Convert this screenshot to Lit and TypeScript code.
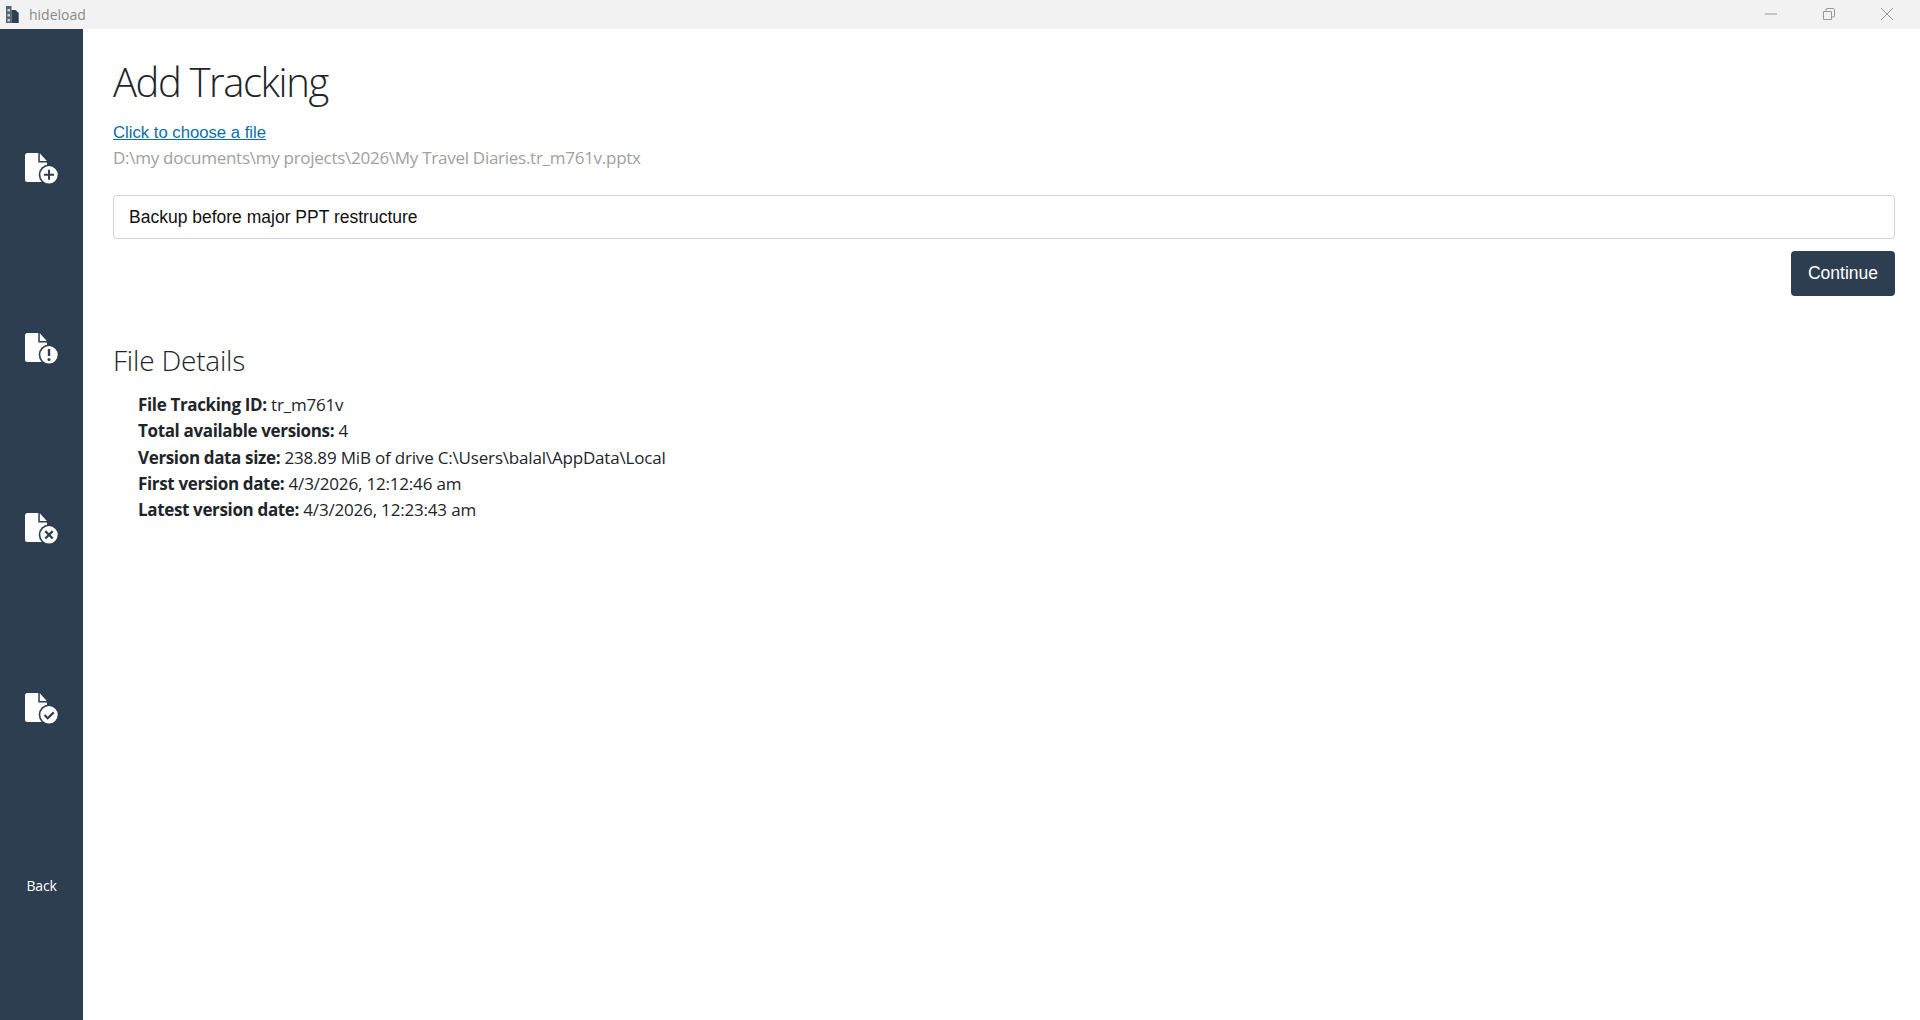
import { LitElement, html, css, svg } from "lit";
import { customElement } from "lit/decorators.js";

const badge = {
  plus: svg`<path d="M49 169.800v10M44 174.800h10" stroke="#2c3e50" stroke-width="2" fill="none"/>`,
  warn: svg`<path d="M49 169v7" stroke="#2c3e50" stroke-width="2.400" fill="none"/><circle cx="49" cy="179.600" r="1.500" fill="#2c3e50"/>`,
  cross: svg`<path d="M45.300 171.100l7.400 7.400M52.700 171.100l-7.400 7.400" stroke="#2c3e50" stroke-width="2.200" fill="none"/>`,
  check: svg`<path d="M44.500 175l3.200 3.200 6-5.800" stroke="#2c3e50" stroke-width="2.200" fill="none"/>`,
};

function fileIcon(b: keyof typeof badge) {
  return html`<svg class="ficon" width="40" height="36" viewBox="22 150 40 36" aria-hidden="true">
    <path d="M27.500 153H38.300V162.500H47V182H27.500A2.500 2.500 0 0 1 25 179.500V155.500A2.500 2.500 0 0 1 27.500 153Z" fill="#fff"/>
    <path d="M39.800 153.300L46.800 161H39.800Z" fill="#fff"/>
    <circle cx="49" cy="174.800" r="10.300" fill="#2c3e50"/>
    <circle cx="49" cy="174.800" r="8.700" fill="#fff"/>
    ${badge[b]}
  </svg>`;
}

@customElement("app-root")
export class AppRoot extends LitElement {
  static styles = css`
    :host { display: block; height: 100vh; overflow: hidden; background: #fff; font-family: "Open Sans", sans-serif; }
    .titlebar { height: 29px; background: #f2f2f2; display: flex; align-items: center; }
    .logo { margin-left: 5px; display: block; }
    .appname { margin-left: 9px; font-size: 14px; color: #8a8a8a; }
    .winbtns { margin: 0 4px 1px auto; display: flex; align-items: center; }
    .winbtn { width: 58px; display: flex; justify-content: center; }
    .main { display: flex; height: 991px; }
    .side { width: 83px; flex: none; background: #2c3e50; padding-top: 49px; box-sizing: border-box; display: flex; flex-direction: column; }
    .navitem { height: 180px; display: flex; align-items: center; justify-content: center; }
    .ficon { display: block; margin-left: 1px; }
    .back { color: #fff; font-size: 14px; height: 174px; display: flex; align-items: center; justify-content: center; letter-spacing: -0.2px; }
    .content { flex: 1; padding: 0 25px 0 30px; min-width: 0; }
    h1 { margin: 29px 0 0; font-size: 40px; line-height: 48px; font-weight: 300; color: #212529; letter-spacing: -1.4px; }
    .link { display: block; margin-top: 15px; font: 16.700px/24px "Liberation Sans", sans-serif; color: #0a6ea8; text-decoration: underline; }
    .path { margin-top: 1px; font-size: 17px; line-height: 24px; color: #a0a0a0; letter-spacing: -0.270px; }
    .field { display: block; width: 100%; box-sizing: border-box; margin-top: 25px; height: 44px; padding: 0 15px; border: 1px solid #ced4da; border-radius: 4px; font: 17.500px "Liberation Sans", sans-serif; color: #111; background: #fff; outline: none; }
    .actions { display: flex; justify-content: flex-end; margin-top: 12px; }
    .btn { height: 45px; width: 104px; border: 0; border-radius: 4px; background: #2c3e50; color: #fff; font: 17.500px "Liberation Sans", sans-serif; padding: 0; }
    h3 { margin: 47px 0 0; font-size: 28px; line-height: 34px; font-weight: 300; color: #212529; letter-spacing: -0.200px; }
    dl { margin: 15px 0 0 25px; font-size: 17px; line-height: 26.250px; color: #212529; letter-spacing: -0.180px; }
    dl div { white-space: nowrap; }
    dt, dd { display: inline; margin: 0; }
    dt { font-weight: 700; letter-spacing: -0.350px; }
  `;

  render() {
    const rows = [
      ["File Tracking ID:", "tr_m761v"],
      ["Total available versions:", "4"],
      ["Version data size:", "238.89 MiB of drive C:\\Users\\balal\\AppData\\Local"],
      ["First version date:", "4/3/2026, 12:12:46 am"],
      ["Latest version date:", "4/3/2026, 12:23:43 am"],
    ];
    return html`
      <div class="titlebar">
        <svg class="logo" width="15" height="18" viewBox="0 0 15 18" aria-hidden="true">
          <path d="M1 0h5.500v17H1z" fill="#55636f"/><path d="M6.500 4h4l3.200 3v10H6.500z" fill="#2c3e50"/><path d="M2.500 3h2.500v2.500H2.500zM2.500 8h2.500v2.500H2.500zM2.500 13h2.500v2.500H2.500z" fill="#c9ced3"/>
        </svg>
        <span class="appname">hideload</span>
        <div class="winbtns">
          <span class="winbtn"><svg width="14" height="14" viewBox="0 0 14 14"><path d="M1 7h12" stroke="#999" fill="none"/></svg></span>
          <span class="winbtn"><svg width="14" height="14" viewBox="0 0 14 14"><path d="M1.500 4.500h8v8h-8zM4 4.500V2.500q0-1 1-1h6.500q1 0 1 1V9q0 1-1 1H9.500" stroke="#999" fill="none"/></svg></span>
          <span class="winbtn"><svg width="14" height="14" viewBox="0 0 14 14"><path d="M1 1l12 12M13 1L1 13" stroke="#999" fill="none"/></svg></span>
        </div>
      </div>
      <div class="main">
        <nav class="side">
          <div class="navitem">${fileIcon("plus")}</div>
          <div class="navitem">${fileIcon("warn")}</div>
          <div class="navitem">${fileIcon("cross")}</div>
          <div class="navitem">${fileIcon("check")}</div>
          <div class="back">Back</div>
        </nav>
        <main class="content">
          <h1>Add Tracking</h1>
          <a class="link" href="#">Click to choose a file</a>
          <div class="path">D:\\my documents\\my projects\\2026\\My Travel Diaries.tr_m761v.pptx</div>
          <input class="field" .value=${"Backup before major PPT restructure"} />
          <div class="actions"><button class="btn">Continue</button></div>
          <h3>File Details</h3>
          <dl>${rows.map(([k, v]) => html`<div><dt>${k}</dt> <dd>${v}</dd></div>`)}</dl>
        </main>
      </div>
    `;
  }
}
